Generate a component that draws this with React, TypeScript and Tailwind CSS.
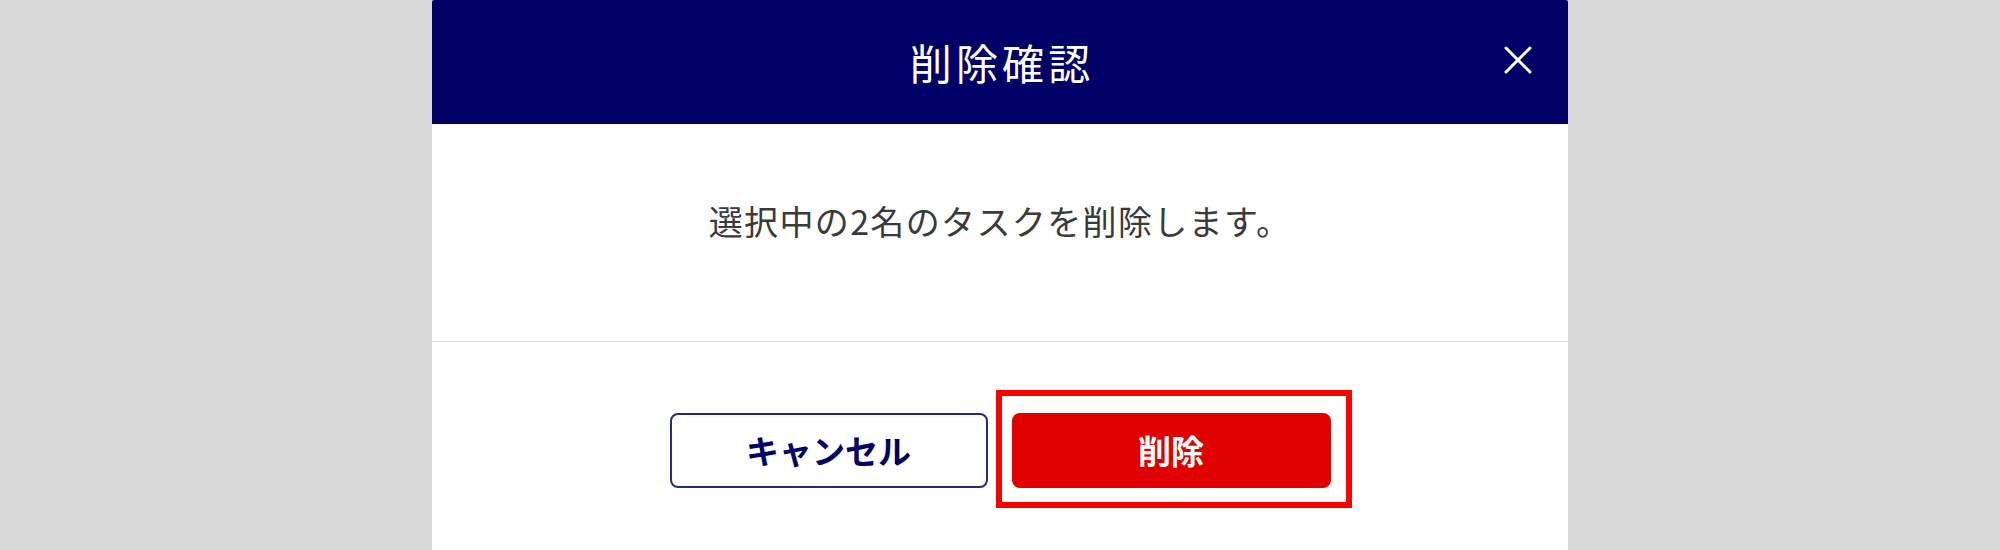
const CloseIcon: React.FC = () => (
  <svg width="28" height="28" viewBox="0 0 28 28" fill="none" stroke="white" strokeWidth="3" strokeLinecap="round">
    <line x1="2" y1="2" x2="26" y2="26" />
    <line x1="26" y1="2" x2="2" y2="26" />
  </svg>
);

const DeleteConfirmModal: React.FC = () => {
  return (
    <div className="w-[1136px] self-start bg-white rounded-t-[2px] flex flex-col">
      <div className="relative h-[124px] bg-[#000066] rounded-t-[2px] flex items-center justify-center">
        <h1 className="text-[42px] leading-none tracking-[0.1em] mr-[-0.1em] text-white font-normal">
          削除確認
        </h1>
        <button className="absolute right-[36px] top-[46px] flex items-center justify-center">
          <CloseIcon />
        </button>
      </div>

      <div className="h-[217px] flex items-center justify-center pb-[24px]">
        <p className="text-[34px] leading-none tracking-[0.04em] text-[#3a3a3a]">
          選択中の2名のタスクを削除します。
        </p>
      </div>

      <div className="border-t border-[#dcdcdc]" />

      <div className="pt-[71px] pb-[80px] flex justify-center gap-[24px]">
        <button className="w-[318px] h-[75px] rounded-[8px] border-2 border-[#2a2a80] bg-white text-[#000066] text-[33px] font-bold leading-none">
          キャンセル
        </button>
        <div className="relative">
          <button className="w-[319px] h-[75px] rounded-[8px] bg-[#e00000] text-white text-[33px] font-bold leading-none">
            削除
          </button>
          <span className="absolute -left-[16px] -top-[23px] -right-[21px] -bottom-[20px] border-[6px] border-[#ff0000] pointer-events-none" />
        </div>
      </div>
    </div>
  );
};

export default function App() {
  return (
    <div
      className="w-full h-[550px] bg-[#d9d9d9] flex justify-center overflow-hidden"
      style={{ fontFamily: '"Noto Sans CJK JP", "Noto Sans", sans-serif' }}
    >
      <DeleteConfirmModal />
    </div>
  );
}
